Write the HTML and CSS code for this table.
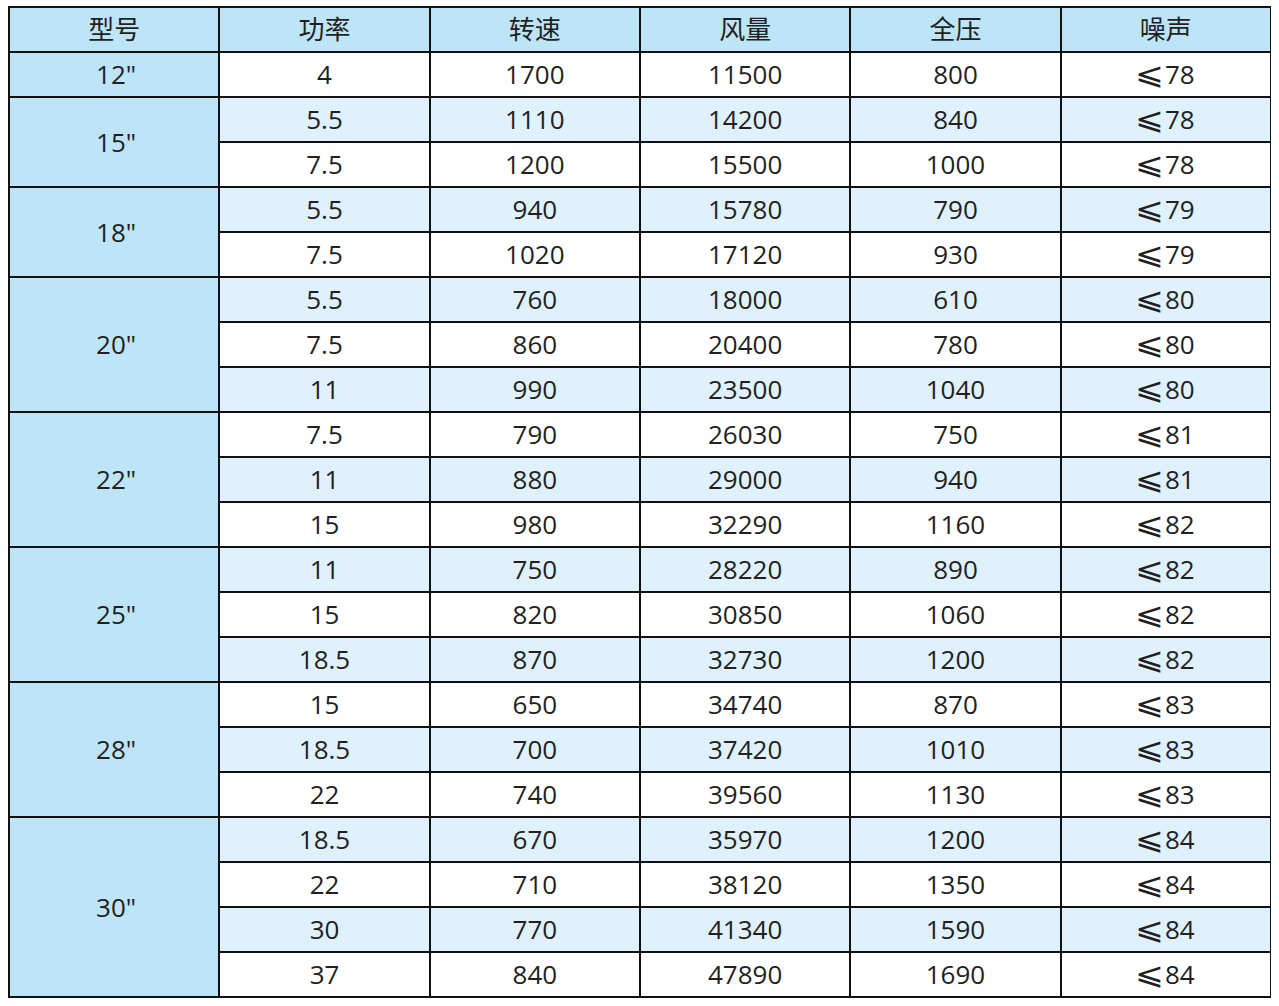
FILE: index.html
```html
<!DOCTYPE html>
<html lang="zh">
<head>
<meta charset="utf-8">
<link rel="stylesheet" href="styles.css">
</head>
<body>
<table class="spec">
<thead>
<tr><th>型号</th><th>功率</th><th>转速</th><th>风量</th><th>全压</th><th>噪声</th></tr>
</thead>
<tbody>
<tr class="w"><td class="model">12"</td><td>4</td><td>1700</td><td>11500</td><td>800</td><td><span class="le">⩽</span>78</td></tr>
<tr class="l"><td class="model" rowspan="2">15"</td><td>5.5</td><td>1110</td><td>14200</td><td>840</td><td><span class="le">⩽</span>78</td></tr>
<tr class="w"><td>7.5</td><td>1200</td><td>15500</td><td>1000</td><td><span class="le">⩽</span>78</td></tr>
<tr class="l"><td class="model" rowspan="2">18"</td><td>5.5</td><td>940</td><td>15780</td><td>790</td><td><span class="le">⩽</span>79</td></tr>
<tr class="w"><td>7.5</td><td>1020</td><td>17120</td><td>930</td><td><span class="le">⩽</span>79</td></tr>
<tr class="l"><td class="model" rowspan="3">20"</td><td>5.5</td><td>760</td><td>18000</td><td>610</td><td><span class="le">⩽</span>80</td></tr>
<tr class="w"><td>7.5</td><td>860</td><td>20400</td><td>780</td><td><span class="le">⩽</span>80</td></tr>
<tr class="l"><td>11</td><td>990</td><td>23500</td><td>1040</td><td><span class="le">⩽</span>80</td></tr>
<tr class="w"><td class="model" rowspan="3">22"</td><td>7.5</td><td>790</td><td>26030</td><td>750</td><td><span class="le">⩽</span>81</td></tr>
<tr class="l"><td>11</td><td>880</td><td>29000</td><td>940</td><td><span class="le">⩽</span>81</td></tr>
<tr class="w"><td>15</td><td>980</td><td>32290</td><td>1160</td><td><span class="le">⩽</span>82</td></tr>
<tr class="l"><td class="model" rowspan="3">25"</td><td>11</td><td>750</td><td>28220</td><td>890</td><td><span class="le">⩽</span>82</td></tr>
<tr class="w"><td>15</td><td>820</td><td>30850</td><td>1060</td><td><span class="le">⩽</span>82</td></tr>
<tr class="l"><td>18.5</td><td>870</td><td>32730</td><td>1200</td><td><span class="le">⩽</span>82</td></tr>
<tr class="w"><td class="model" rowspan="3">28"</td><td>15</td><td>650</td><td>34740</td><td>870</td><td><span class="le">⩽</span>83</td></tr>
<tr class="l"><td>18.5</td><td>700</td><td>37420</td><td>1010</td><td><span class="le">⩽</span>83</td></tr>
<tr class="w"><td>22</td><td>740</td><td>39560</td><td>1130</td><td><span class="le">⩽</span>83</td></tr>
<tr class="l"><td class="model" rowspan="4">30"</td><td>18.5</td><td>670</td><td>35970</td><td>1200</td><td><span class="le">⩽</span>84</td></tr>
<tr class="w"><td>22</td><td>710</td><td>38120</td><td>1350</td><td><span class="le">⩽</span>84</td></tr>
<tr class="l"><td>30</td><td>770</td><td>41340</td><td>1590</td><td><span class="le">⩽</span>84</td></tr>
<tr class="w"><td>37</td><td>840</td><td>47890</td><td>1690</td><td><span class="le">⩽</span>84</td></tr>
</tbody>
</table>
</body>
</html>
```
FILE: styles.css
```css
html, body {
  background: #ffffff;
}
body {
  margin: 6px 8px;
  font-family: "Open Sans", "Noto Sans CJK SC", "DejaVu Sans", sans-serif;
  color: #231f20;
}
.spec {
  border-collapse: collapse;
  width: 1264px;
  table-layout: fixed;
  font-size: 26px;
}
.spec th,
.spec td {
  border: 2px solid #111111;
  height: 42px;
  padding: 0 0 1px 0;
  text-align: center;
  vertical-align: middle;
  font-weight: normal;
  line-height: 26px;
}
.spec th {
  background: #bee4f8;
}
.spec tr.w td {
  background: #ffffff;
}
.spec tr.l td {
  background: #dff1fc;
}
.spec td.model,
.spec tr.w td.model,
.spec tr.l td.model {
  background: #bee4f8;
  padding-left: 4px;
}
.le {
  display: inline-block;
  font-family: "DejaVu Sans", sans-serif;
  font-size: 30px;
  line-height: 0;
  margin-right: 3px;
  transform: scaleX(1.15);
  font-weight: 200;
}
```
